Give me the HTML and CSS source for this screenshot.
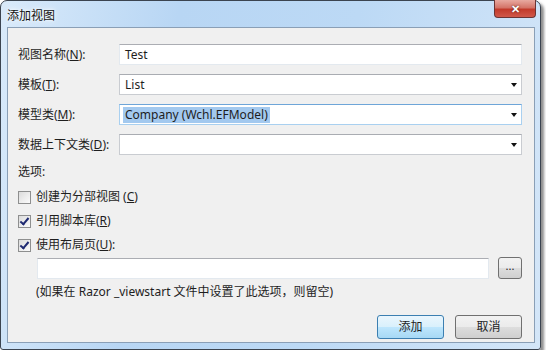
FILE: index.html
```html
<!DOCTYPE html>
<html lang="zh-CN">
<head>
    <meta charset="UTF-8">
    <title>添加视图</title>
    <link rel="stylesheet" href="styles.css">
</head>
<body>

    <div class="window">
        <div class="titlebar">
            <span class="title">添加视图</span>
            <span class="close">✕</span>
        </div>

        <div class="panel">
            <div class="fields">
                <label>视图名称(<u>N</u>):</label>
                <div class="box">Test</div>

                <label>模板(<u>T</u>):</label>
                <div class="box combo">List<span class="arrow"></span></div>

                <label>模型类(<u>M</u>):</label>
                <div class="box combo focus"><span class="sel">Company (Wchl.EFModel)</span><span class="arrow"></span></div>

                <label>数据上下文类(<u>D</u>):</label>
                <div class="box combo"><span class="arrow"></span></div>
            </div>

            <div class="section">选项:</div>

            <div class="checks">
                <div class="check"><span class="cb"></span><span>创建为分部视图 (<u>C</u>)</span></div>
                <div class="check"><span class="cb on"></span><span>引用脚本库(<u>R</u>)</span></div>
                <div class="check"><span class="cb on"></span><span>使用布局页(<u>U</u>):</span></div>
            </div>

            <div class="layout-row">
                <div class="box wide"></div>
                <div class="btn small">...</div>
            </div>
            <div class="hint">(如果在 Razor _viewstart 文件中设置了此选项，则留空)</div>

            <div class="actions">
                <div class="btn default">添加</div>
                <div class="btn">取消</div>
            </div>
        </div>
    </div>

</body>
</html>
```

FILE: styles.css
```css
body {
    margin: 0;
    background-color: #ffffff;
    font-family: "Noto Sans", "Noto Sans CJK SC", sans-serif;
    font-size: 12px;
    color: #1e1e1e;
}
.window {
    width: 541px;
    height: 350px;
    border: 1px solid #3b4450;
    border-radius: 7px 7px 3px 3px;
    background: linear-gradient(100deg, #d9eafa 0%, #b8d6f4 30%, #bcd9f5 60%, #d4e6f8 100%);
    box-shadow: 3px 3px 3px rgba(0, 0, 0, 0.45);
    padding: 0 5px 0 6px;
    box-sizing: border-box;
}
.titlebar {
    height: 26px;
    display: flex;
    align-items: center;
    justify-content: space-between;
}
.title {
    font-size: 12px;
    color: #111;
    text-shadow: 0 0 6px #ffffff, 0 0 3px #ffffff;
    margin-top: 1px;
}
.close {
    align-self: flex-start;
    width: 42px;
    height: 18px;
    margin-right: -1px;
    margin-top: -1px;
    border: 1px solid #6b3434;
    border-top: none;
    border-radius: 0 0 4px 4px;
    background: linear-gradient(#e8a9a0 0%, #d47468 45%, #c23a2b 55%, #d0584a 100%);
    color: #ffffff;
    font-size: 11px;
    font-weight: bold;
    text-align: center;
    line-height: 17px;
    text-shadow: 0 0 2px #4a1410;
    box-sizing: border-box;
}
.panel {
    height: 316px;
    border: 1px solid #8a9fb6;
    background-color: #f0f0f0;
    padding: 16px 12px 0 10px;
    box-sizing: border-box;
}
.fields {
    display: grid;
    grid-template-columns: 101px 1fr;
    row-gap: 9px;
    align-items: center;
}
label {
    line-height: 16px;
}
.box {
    height: 21px;
    border: 1px solid #e3e9ef;
    border-top-color: #abadb3;
    background-color: #ffffff;
    box-sizing: border-box;
    padding: 0 5px;
    line-height: 19px;
    display: flex;
    align-items: center;
}
.combo {
    border-color: #c9ccd1;
    border-top-color: #a9acb2;
}
.focus {
    border-color: #a9d0f0;
    border-top-color: #6ea5d8;
    padding-left: 3px;
}
.sel {
    background-color: #a3c9ef;
    padding: 0 2px;
    line-height: 16px;
}
.arrow {
    width: 0;
    height: 0;
    border-left: 3px solid transparent;
    border-right: 3px solid transparent;
    border-top: 4px solid #111;
    margin-left: auto;
    margin-right: -1px;
}
.section {
    margin-top: 9px;
    line-height: 16px;
}
.checks {
    display: flex;
    flex-direction: column;
    gap: 8px;
    margin-top: 9px;
}
.check {
    display: flex;
    align-items: center;
    gap: 5px;
    line-height: 16px;
}
.cb {
    width: 13px;
    height: 13px;
    border: 1px solid #8e8f8f;
    background: linear-gradient(135deg, #dcdcdc, #fbfbfb);
    box-sizing: border-box;
    position: relative;
}
.cb.on::after {
    content: "";
    position: absolute;
    left: 3px;
    top: 0px;
    width: 3px;
    height: 7px;
    border-right: 2px solid #1f2a72;
    border-bottom: 2px solid #1f2a72;
    transform: rotate(40deg);
}
.layout-row {
    display: flex;
    align-items: center;
    gap: 9px;
    margin: 4px 0 0 19px;
}
.wide {
    flex: 1;
}
.btn {
    height: 24px;
    width: 67px;
    border: 1px solid #707070;
    border-radius: 3px;
    background: linear-gradient(#f2f2f2 0%, #ebebeb 50%, #dddddd 51%, #cfcfcf 100%);
    box-sizing: border-box;
    text-align: center;
    line-height: 22px;
}
.small {
    width: 24px;
    height: 22px;
    line-height: 16px;
    font-size: 11px;
}
.default {
    border-color: #3c7fb1;
    background: linear-gradient(#eaf6fd 0%, #d9f0fc 50%, #bee6fd 51%, #a7d9f5 100%);
}
.hint {
    margin: 5px 0 0 18px;
    line-height: 16px;
}
.actions {
    display: flex;
    justify-content: flex-end;
    gap: 11px;
    margin-top: 15px;
}
```
